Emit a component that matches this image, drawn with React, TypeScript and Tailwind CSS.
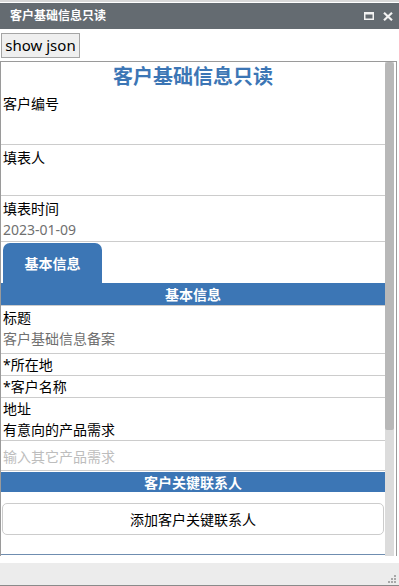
import React from "react";

const cjk = "font-['Noto_Sans','Noto_Sans_CJK_SC',sans-serif]";

function Row({
  children,
  className = "",
  border = true,
}: {
  children: React.ReactNode;
  className?: string;
  border?: boolean;
}) {
  return (
    <div className={`pl-[2px] ${border ? "border-b border-[#cccccc]" : ""} ${className}`}>
      {children}
    </div>
  );
}

export default function App() {
  return (
    <div className={`w-[399px] h-[586px] bg-white flex flex-col overflow-hidden text-black ${cjk}`}>
      <div className="h-[2px] bg-[#d8d8d8]" />
      <div className="h-[1px] bg-white" />
      {/* title bar */}
      <div className="h-[26px] bg-[#646b71] flex items-center justify-between pl-[10px] pr-[6px]">
        <span className="text-white text-[12px] font-bold leading-none">客户基础信息只读</span>
        <div className="flex items-center gap-[9px]">
          <svg width="10" height="8" viewBox="0 0 10 8">
            <rect x="0.75" y="0.75" width="8.5" height="6.5" fill="none" stroke="#f2f2f2" strokeWidth="1.5" />
            <rect x="0" y="0" width="10" height="2.5" fill="#f2f2f2" />
          </svg>
          <svg width="10" height="9" viewBox="0 0 10 9">
            <path d="M1 0.8 L9 8.2 M9 0.8 L1 8.2" stroke="#f2f2f2" strokeWidth="2.2" />
          </svg>
        </div>
      </div>
      <div className="h-[4px]" />
      <div className="pl-[1px] h-[25px] flex">
        <button className="w-[79px] h-[25px] bg-[#efefef] border border-[#a5a5a5] text-[15px] leading-none text-black font-['Noto_Sans',sans-serif] pb-[1px]">
          show json
        </button>
      </div>
      <div className="h-[3px]" />
      {/* main box */}
      <div className="h-[495px] w-[397px] border-t border-l border-r border-[#9a9a9a] flex">
        <div className="flex-1 flex flex-col">
          <div className="h-[30px] flex items-center justify-center text-[20px] font-bold text-[#3c76b5] leading-none">
            客户基础信息只读
          </div>
          <Row className="pt-[2px]">
            <div className="h-[20px] leading-[20px] text-[14px]">客户编号</div>
            <div className="h-[30px]" />
          </Row>
          <Row className="pt-[3px]">
            <div className="h-[20px] leading-[20px] text-[14px]">填表人</div>
            <div className="h-[27px]" />
          </Row>
          <Row className="pt-[3px]">
            <div className="h-[20px] leading-[20px] text-[14px]">填表时间</div>
            <div className="h-[22px] leading-[22px] text-[14px] text-[#707070]">2023-01-09</div>
          </Row>
          <div className="pt-[1px] pl-[2px] flex">
            <div className="w-[99px] h-[40px] bg-[#3c76b5] rounded-t-[7px] flex items-center justify-center text-white text-[14px] font-bold">
              基本信息
            </div>
          </div>
          <div className="h-[22px] bg-[#3c76b5] flex items-center justify-center text-white text-[14px] font-bold border-b border-[#cccccc] box-content">
            基本信息
          </div>
          <Row className="pt-[2px]">
            <div className="h-[20px] leading-[20px] text-[14px]">标题</div>
            <div className="h-[22px] leading-[22px] text-[14px] text-[#707070]">客户基础信息备案</div>
            <div className="h-[3px]" />
          </Row>
          <Row>
            <div className="h-[21px] leading-[21px] text-[14px]">*所在地</div>
          </Row>
          <Row>
            <div className="h-[21px] leading-[21px] text-[14px]">*客户名称</div>
          </Row>
          <Row border={false}>
            <div className="h-[21px] leading-[21px] text-[14px]">地址</div>
          </Row>
          <Row>
            <div className="h-[21px] leading-[21px] text-[14px]">有意向的产品需求</div>
          </Row>
          <Row className="pt-[2px]">
            <div className="h-[27px] leading-[27px] text-[14px] text-[#bdbdbd]">输入其它产品需求</div>
          </Row>
          <div className="h-[1px]" />
          <div className="h-[20px] bg-[#3c76b5] flex items-center justify-center text-white text-[14px] font-bold">
            客户关键联系人
          </div>
          <div className="h-[11px]" />
          <div className="px-[1px]">
            <div className="h-[32px] border border-[#cccccc] rounded-[5px] flex items-center justify-center text-[14px]">
              添加客户关键联系人
            </div>
          </div>
          <div className="flex-1" />
          <div className="h-[1px] bg-[#6f8db0]" />
          <div className="h-[1px]" />
        </div>
        <div className="w-[9px] bg-[#dcdcdc] flex flex-col">
          <div className="h-[368px] bg-[#b8b8b8] rounded-t-[3px] rounded-b-[2px]" />
        </div>
        <div className="w-[2px]" />
      </div>
      <div className="h-[7px]" />
      <div className="h-[23px] bg-[#ececec] border-b border-[#8a8a8a] flex items-end justify-end pr-[3px] pb-[2px]">
        <svg width="8" height="8" viewBox="0 0 8 8">
          <rect x="6" y="0" width="2" height="2" fill="#a8a8a8" />
          <rect x="3" y="3" width="2" height="2" fill="#a8a8a8" />
          <rect x="6" y="3" width="2" height="2" fill="#a8a8a8" />
          <rect x="0" y="6" width="2" height="2" fill="#a8a8a8" />
          <rect x="3" y="6" width="2" height="2" fill="#a8a8a8" />
          <rect x="6" y="6" width="2" height="2" fill="#a8a8a8" />
        </svg>
      </div>
    </div>
  );
}
